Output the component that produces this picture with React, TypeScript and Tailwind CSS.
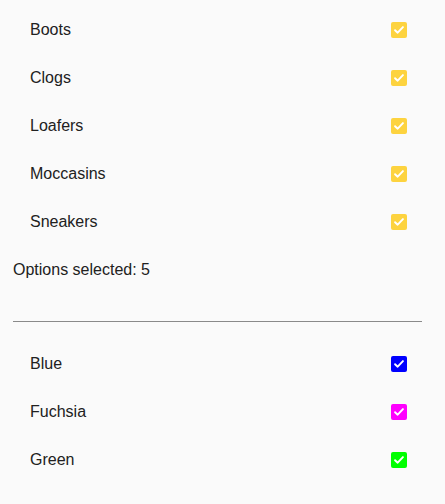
import React from 'react';

const shoes = ['Boots', 'Clogs', 'Loafers', 'Moccasins', 'Sneakers'];
const colors = [
  { name: 'Blue', bg: 'bg-[#0000ff]' },
  { name: 'Fuchsia', bg: 'bg-[#ff00ff]' },
  { name: 'Green', bg: 'bg-[#00ff00]' },
];

function Check({ bg }: { bg: string }) {
  return (
    <span className={`flex h-4 w-4 items-center justify-center rounded-[2px] ${bg}`}>
      <svg viewBox="0 0 16 16" className="h-[14px] w-[14px]" fill="none">
        <path d="M3.5 8.3l3 2.8 6-6.4" stroke="white" strokeWidth="2.2" strokeLinecap="round" strokeLinejoin="round" />
      </svg>
    </span>
  );
}

function Row({ label, bg }: { label: string; bg: string }) {
  return (
    <div className="flex h-12 items-center justify-between pl-[17px] pr-[15px]">
      <span>{label}</span>
      <Check bg={bg} />
    </div>
  );
}

export default function App() {
  return (
    <div className="min-h-[504px] bg-[#fafafa] pt-[6px] pl-[13px] pr-[23px] text-[16px] text-[#212121] [font-family:'Liberation_Sans',Arial,sans-serif]">
      {shoes.map((s) => (
        <Row key={s} label={s} bg="bg-[#fdd33f]" />
      ))}
      <div className="flex h-12 items-center">Options selected: 5</div>
      <div className="mt-[27px] h-px bg-[#8a8a8a]" />
      <div className="mt-[18px]">
        {colors.map((c) => (
          <Row key={c.name} label={c.name} bg={c.bg} />
        ))}
      </div>
    </div>
  );
}
